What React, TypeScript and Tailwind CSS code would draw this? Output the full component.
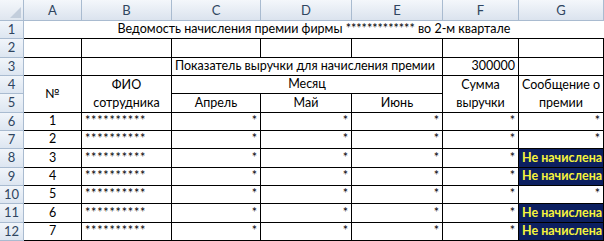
const font = { fontFamily: 'Lato, "Open Sans", "Liberation Sans", sans-serif' }

const cols = ['A', 'B', 'C', 'D', 'E', 'F', 'G']

// rows 6..12: number, flag (true = "Не начислена")
const people = [
  { n: 1, miss: false },
  { n: 2, miss: false },
  { n: 3, miss: true },
  { n: 4, miss: true },
  { n: 5, miss: false },
  { n: 6, miss: true },
  { n: 7, miss: true },
]

const cell = 'border-r border-b border-black flex items-center px-[3px] whitespace-nowrap'

function RowHead({ n }: { n: number }) {
  return (
    <div className="bg-gradient-to-b from-[#f1f5fa] to-[#dde6f1] border-r border-b border-[#a9bbd0] flex items-center justify-center text-[13px] text-[#2f4560]">
      {n}
    </div>
  )
}

export default function App() {
  return (
    <div
      className="w-[604px] h-[241px] bg-white text-[12.5px] leading-none text-black overflow-hidden grid grid-cols-[24px_58px_90px_89px_91px_91px_76px_85px] grid-rows-[21px_repeat(12,18.33px)]"
      style={font}
    >
      {/* column headers */}
      <div className="bg-gradient-to-b from-[#f4f7fb] to-[#dfe6ef] border-r border-b border-[#a9bbd0] relative">
        <svg className="absolute right-[2px] bottom-[2px]" width="11" height="11" viewBox="0 0 11 11">
          <path d="M11 0 L11 11 L0 11 Z" fill="#c3cedc" />
        </svg>
      </div>
      {cols.map(c => (
        <div key={c} className="bg-gradient-to-b from-[#f4f7fb] to-[#dbe3ee] border-r border-b border-[#a9bbd0] flex items-center justify-center text-[13px] text-[#2f4560]">
          {c}
        </div>
      ))}

      {/* row 1 */}
      <RowHead n={1} />
      <div className="col-span-7 border-b border-black flex items-center justify-center">
        Ведомость начисления премии фирмы ************* во 2-м квартале
      </div>

      {/* row 2 */}
      <RowHead n={2} />
      {cols.map(c => <div key={c} className={cell} />)}

      {/* row 3 */}
      <RowHead n={3} />
      <div className={cell} />
      <div className={cell} />
      <div className={`${cell} col-span-3`}>Показатель выручки для начисления премии</div>
      <div className={`${cell} justify-end`}>300000</div>
      <div className={cell} />

      {/* rows 4-5 */}
      <RowHead n={4} />
      <div className={`${cell} row-span-2 justify-center`}>№</div>
      <div className={`${cell} row-span-2 justify-center flex-col whitespace-normal text-center leading-[18px]`}>
        <span>ФИО</span>
        <span>сотрудника</span>
      </div>
      <div className={`${cell} col-span-3 justify-center`}>Месяц</div>
      <div className={`${cell} row-span-2 justify-center flex-col whitespace-normal text-center leading-[18px]`}>
        <span>Сумма</span>
        <span>выручки</span>
      </div>
      <div className={`${cell} row-span-2 justify-center flex-col whitespace-normal text-center leading-[18px]`}>
        <span>Сообщение о</span>
        <span>премии</span>
      </div>
      <RowHead n={5} />
      <div className={`${cell} justify-center`}>Апрель</div>
      <div className={`${cell} justify-center`}>Май</div>
      <div className={`${cell} justify-center`}>Июнь</div>

      {/* data rows */}
      {people.map(p => (
        <div key={p.n} className="contents">
          <RowHead n={p.n + 5} />
          <div className={`${cell} justify-center`}>{p.n}</div>
          <div className={`${cell} tracking-[0.8px]`}>**********</div>
          <div className={`${cell} justify-end`}>*</div>
          <div className={`${cell} justify-end`}>*</div>
          <div className={`${cell} justify-end`}>*</div>
          <div className={`${cell} justify-end`}>*</div>
          {p.miss ? (
            <div className={`${cell} bg-[#0c1f60] text-[#f6f43c] font-bold text-[12.5px] overflow-hidden`}>Не начислена</div>
          ) : (
            <div className={`${cell} justify-end`}>*</div>
          )}
        </div>
      ))}
    </div>
  )
}
